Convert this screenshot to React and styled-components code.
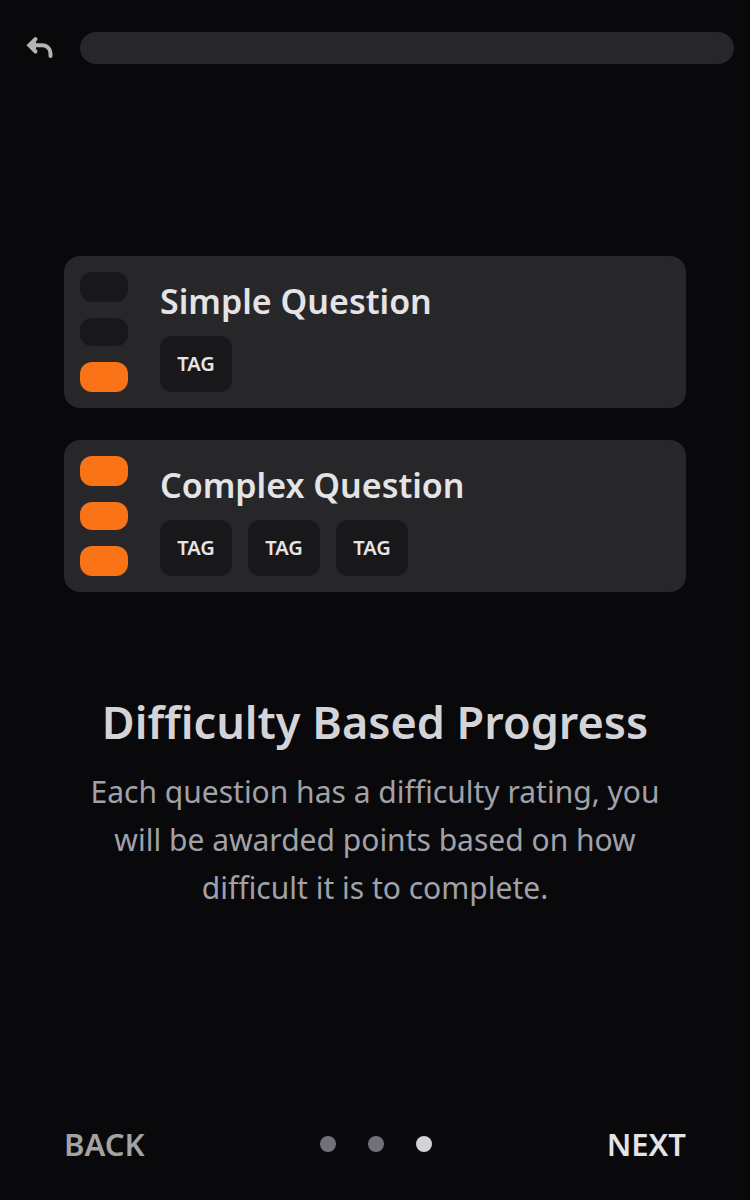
import React from "react";
import styled, { createGlobalStyle } from "styled-components";

const GlobalStyle = createGlobalStyle`
  *, *::before, *::after { box-sizing: border-box; }
  body {
    margin: 0;
    background: #09090b;
    color: #e4e4e7;
    font-family: "Noto Sans", "Open Sans", sans-serif;
  }
  button { font: inherit; border: 0; background: none; padding: 0; cursor: pointer; }
  h1, h2, p, ul { margin: 0; padding: 0; }
`;

const Page = styled.div`
  min-height: 100vh;
  display: flex;
  flex-direction: column;
`;

const TopBar = styled.header`
  display: flex;
  align-items: center;
  gap: 16px;
  padding: 24px 16px;
`;

const IconButton = styled.button`
  width: 48px;
  height: 48px;
  display: grid;
  place-items: center;
  color: #b4b4b4;
`;

const Track = styled.div`
  flex: 1;
  height: 32px;
  border-radius: 16px;
  background: #27272a;
`;

const Main = styled.main`
  flex: 1;
  display: flex;
  flex-direction: column;
  justify-content: center;
  gap: 96px;
  padding: 0 64px 16px;
`;

const Cards = styled.div`
  display: flex;
  flex-direction: column;
  gap: 32px;
`;

const Card = styled.article`
  display: flex;
  gap: 32px;
  padding: 16px;
  border-radius: 16px;
  background: #27272a;
`;

const Meter = styled.div`
  width: 48px;
  display: grid;
  grid-template-rows: 30px 28px 30px;
  gap: 16px;
`;

const Level = styled.span`
  border-radius: 12px;
  background: ${({ $on }) => ($on ? "#f97316" : "#18181b")};
`;

const CardTitle = styled.h2`
  font-size: 34px;
  line-height: 58px;
  font-weight: 600;
  margin-bottom: 6px;
`;

const Tags = styled.ul`
  display: flex;
  gap: 16px;
  list-style: none;
`;

const Tag = styled.li`
  width: 72px;
  padding: 16px 0;
  border-radius: 12px;
  background: #18181b;
  font-size: 20px;
  line-height: 24px;
  font-weight: 600;
  text-align: center;
`;

const Copy = styled.section`
  text-align: center;
`;

const Heading = styled.h1`
  font-size: 45px;
  line-height: 68px;
  font-weight: 600;
  color: #d4d4d8;
  margin-bottom: 12px;
`;

const Text = styled.p`
  font-size: 30px;
  line-height: 48px;
  color: #a1a1aa;
`;

const Footer = styled.footer`
  display: flex;
  justify-content: space-between;
  align-items: center;
  padding: 32px 64px;
`;

const NavButton = styled.button`
  && {
    color: ${({ $primary }) => ($primary ? "#e4e4e7" : "#a3a3a3")};
    font-size: 31px;
    line-height: 48px;
    font-weight: 600;
  }
`;

const Dots = styled.div`
  display: flex;
  gap: 32px;
`;

const Dot = styled.span`
  width: 16px;
  height: 16px;
  border-radius: 50%;
  background: ${({ $active }) => ($active ? "#d4d4d8" : "#71717a")};
`;

function QuestionCard({ title, level, tags }) {
  return (
    <Card>
      <Meter role="img" aria-label={`Difficulty ${level} of 3`}>
        {[3, 2, 1].map((n) => (
          <Level key={n} $on={n <= level} />
        ))}
      </Meter>
      <div>
        <CardTitle>{title}</CardTitle>
        <Tags>
          {tags.map((tag, i) => (
            <Tag key={i}>{tag}</Tag>
          ))}
        </Tags>
      </div>
    </Card>
  );
}

export default function App() {
  return (
    <Page>
      <GlobalStyle />
      <TopBar>
        <IconButton aria-label="Return">
          <svg width="32" height="32" viewBox="0 0 32 32" fill="none" stroke="currentColor" strokeWidth="4" strokeLinecap="round" strokeLinejoin="miter">
            <path d="M11.500 7.100 5.300 13.300l6.200 6.200" />
            <path d="M6 13.300h12.500c4.500 0 8 3.500 8 8v2.700" />
            <path d="M5.300 13.300 12 7v12.600z" fill="currentColor" stroke="none" />
          </svg>
        </IconButton>
        <Track />
      </TopBar>
      <Main>
        <Cards>
          <QuestionCard title="Simple Question" level={1} tags={["TAG"]} />
          <QuestionCard title="Complex Question" level={3} tags={["TAG", "TAG", "TAG"]} />
        </Cards>
        <Copy>
          <Heading>Difficulty Based Progress</Heading>
          <Text>
            Each question has a difficulty rating, you will be awarded points based on how difficult it is to complete.
          </Text>
        </Copy>
      </Main>
      <Footer>
        <NavButton>BACK</NavButton>
        <Dots>
          <Dot />
          <Dot />
          <Dot $active />
        </Dots>
        <NavButton $primary>NEXT</NavButton>
      </Footer>
    </Page>
  );
}
